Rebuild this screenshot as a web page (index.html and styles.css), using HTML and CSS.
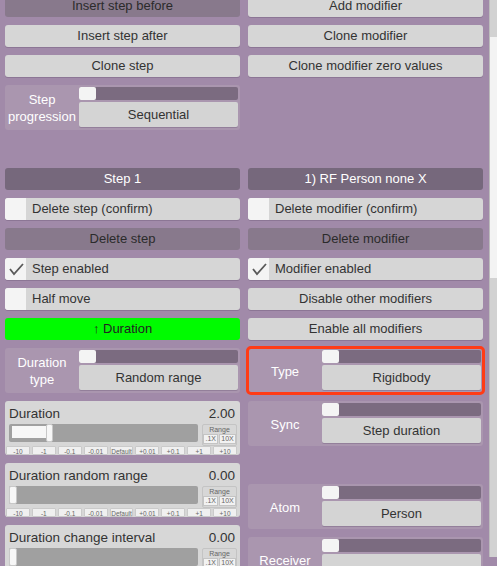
FILE: index.html
```html
<!DOCTYPE html>
<html>
<head>
<meta charset="utf-8">
<link rel="stylesheet" href="styles.css">
</head>
<body>
<div class="screen">
  <div class="content">
    <div class="col">
      <div class="btn dim">Insert step before</div>
      <div class="btn">Insert step after</div>
      <div class="btn">Clone step</div>
      <div class="popup">
        <div class="plabel">Step<br>progression</div>
        <div class="pbody">
          <div class="ptrack"><div class="pknob"></div></div>
          <div class="pbtn">Sequential</div>
        </div>
      </div>
      <div class="header gap-left">Step 1</div>
      <div class="check"><div class="box"></div><span>Delete step (confirm)</span></div>
      <div class="btn dim">Delete step</div>
      <div class="check"><div class="box"><svg width="21" height="22" viewBox="0 0 21 22"><polyline points="5,11 9,16 18,6" fill="none" stroke="#5a5a5a" stroke-width="1.8"/></svg></div><span>Step enabled</span></div>
      <div class="check"><div class="box"></div><span>Half move</span></div>
      <div class="btn green">↑ Duration</div>
      <div class="popup">
        <div class="plabel">Duration<br>type</div>
        <div class="pbody">
          <div class="ptrack"><div class="pknob"></div></div>
          <div class="pbtn">Random range</div>
        </div>
      </div>
      <div class="slider">
        <div class="shead"><span>Duration</span><span>2.00</span></div>
        <div class="smid">
          <div class="strack"><div class="sfill" style="width:35px"></div><div class="sknob"></div></div>
          <div class="range"><div class="rlabel">Range</div><div class="rbtns"><span>.1X</span><span>10X</span></div></div>
        </div>
        <div class="sbtns"><span>-10</span><span>-1</span><span>-0.1</span><span>-0.01</span><span>Default</span><span>+0.01</span><span>+0.1</span><span>+1</span><span>+10</span></div>
      </div>
      <div class="slider">
        <div class="shead"><span>Duration random range</span><span>0.00</span></div>
        <div class="smid">
          <div class="strack"><div class="sknob start"></div></div>
          <div class="range"><div class="rlabel">Range</div><div class="rbtns"><span>.1X</span><span>10X</span></div></div>
        </div>
        <div class="sbtns"><span>-10</span><span>-1</span><span>-0.1</span><span>-0.01</span><span>Default</span><span>+0.01</span><span>+0.1</span><span>+1</span><span>+10</span></div>
      </div>
      <div class="slider">
        <div class="shead"><span>Duration change interval</span><span>0.00</span></div>
        <div class="smid">
          <div class="strack"><div class="sknob start"></div></div>
          <div class="range"><div class="rlabel">Range</div><div class="rbtns"><span>.1X</span><span>10X</span></div></div>
        </div>
        <div class="sbtns"><span>-10</span><span>-1</span><span>-0.1</span><span>-0.01</span><span>Default</span><span>+0.01</span><span>+0.1</span><span>+1</span><span>+10</span></div>
      </div>
    </div>
    <div class="col">
      <div class="btn">Add modifier</div>
      <div class="btn">Clone modifier</div>
      <div class="btn">Clone modifier zero values</div>
      <div class="header gap-right">1) RF Person none X</div>
      <div class="check"><div class="box"></div><span>Delete modifier (confirm)</span></div>
      <div class="btn dim">Delete modifier</div>
      <div class="check"><div class="box"><svg width="21" height="22" viewBox="0 0 21 22"><polyline points="5,11 9,16 18,6" fill="none" stroke="#5a5a5a" stroke-width="1.8"/></svg></div><span>Modifier enabled</span></div>
      <div class="btn">Disable other modifiers</div>
      <div class="btn">Enable all modifiers</div>
      <div class="popup marked">
        <div class="plabel">Type</div>
        <div class="pbody">
          <div class="ptrack"><div class="pknob"></div></div>
          <div class="pbtn">Rigidbody</div>
        </div>
      </div>
      <div class="popup">
        <div class="plabel">Sync</div>
        <div class="pbody">
          <div class="ptrack"><div class="pknob"></div></div>
          <div class="pbtn">Step duration</div>
        </div>
      </div>
      <div class="popup gap-atom">
        <div class="plabel">Atom</div>
        <div class="pbody">
          <div class="ptrack"><div class="pknob"></div></div>
          <div class="pbtn">Person</div>
        </div>
      </div>
      <div class="popup">
        <div class="plabel">Receiver</div>
        <div class="pbody">
          <div class="ptrack"><div class="pknob"></div></div>
          <div class="pbtn"></div>
        </div>
      </div>
    </div>
  </div>
  <div class="scrollbar"><div class="thumb"></div></div>
</div>
</body>
</html>
```
FILE: styles.css
```css
* { box-sizing: border-box; }
html, body { margin: 0; padding: 0; }
body {
  font-family: "Liberation Sans", Arial, sans-serif;
  font-size: 13px;
  color: #333;
  background: #a18aa9;
}
.screen {
  width: 497px;
  height: 566px;
  overflow: hidden;
  display: flex;
  align-items: flex-start;
  background: #a18aa9;
}
.content {
  flex: none;
  width: 489px;
  margin-top: -5px;
  padding-left: 5px;
  display: grid;
  grid-template-columns: 235px 235px;
  column-gap: 8px;
  align-items: start;
}
.col {
  display: flex;
  flex-direction: column;
  gap: 8px;
}
.btn {
  height: 22px;
  line-height: 22px;
  text-align: center;
  background: #d6d6d6;
  border-radius: 3px;
  box-shadow: 0 1px 0 rgba(80, 60, 90, 0.25);
  white-space: nowrap;
}
.btn.dim { background: #88798c; color: #2b2b2b; box-shadow: none; }
.btn.green { background: #00fb00; color: #222; box-shadow: none; }
.header {
  height: 22px;
  line-height: 22px;
  text-align: center;
  background: #76687c;
  color: #fff;
  border-radius: 3px;
}
.gap-left { margin-top: 30px; }
.gap-right { margin-top: 83px; }
.gap-atom { margin-top: 30px; }
.check {
  height: 22px;
  display: flex;
  background: #d6d6d6;
  border-radius: 3px;
  box-shadow: 0 1px 0 rgba(80, 60, 90, 0.25);
  overflow: hidden;
}
.check .box {
  width: 21px;
  height: 22px;
  background: #f4f4f4;
  flex: none;
}
.check .box svg { display: block; }
.check span {
  line-height: 22px;
  padding-left: 6px;
}
.popup {
  height: 45px;
  display: flex;
  background: #aa96af;
  border-radius: 3px;
  padding: 2px 2px 3px 0;
}
.popup.marked {
  outline: 3px solid #ff3b16;
  outline-offset: -1px;
}
.plabel {
  width: 74px;
  flex: none;
  color: #fff;
  text-align: center;
  display: flex;
  align-items: center;
  justify-content: center;
  line-height: 17px;
  padding-top: 2px;
}
.pbody {
  flex: 1;
  display: flex;
  flex-direction: column;
  gap: 2px;
}
.ptrack {
  height: 13px;
  background: #7b6b80;
  border-radius: 2px;
}
.pknob {
  width: 17px;
  height: 13px;
  background: #f4f4f4;
  border-radius: 2px;
}
.pbtn {
  height: 25px;
  line-height: 25px;
  text-align: center;
  background: #d4d4d4;
  border-radius: 2px;
  box-shadow: 0 1px 0 rgba(80, 60, 90, 0.25);
}
.slider {
  height: 54px;
  background: #d7d7d7;
  border-radius: 3px;
  display: flex;
  flex-direction: column;
}
.shead {
  height: 23px;
  display: flex;
  justify-content: space-between;
  align-items: center;
  padding: 1px 5px 0 4px;
  font-size: 13.5px;
  color: #333;
}
.smid {
  height: 22px;
  display: flex;
  align-items: flex-start;
  padding-left: 4px;
  gap: 4px;
}
.strack {
  width: 189px;
  height: 18px;
  background: #a0a0a0;
  border-radius: 2px;
  position: relative;
}
.sfill {
  position: absolute;
  left: 3px;
  top: 2px;
  height: 12px;
  background: #f7f7f7;
}
.sknob {
  position: absolute;
  left: 37px;
  top: 0;
  width: 7px;
  height: 18px;
  background: #f7f7f7;
  border: 1px solid #c8c8c8;
  border-radius: 2px;
}
.sknob.start { left: 0; width: 8px; }
.range {
  width: 35px;
  height: 22px;
  border: 1px solid #c4c4c4;
  border-radius: 2px;
  display: flex;
  flex-direction: column;
  align-items: center;
}
.rlabel {
  font-size: 7px;
  line-height: 9px;
  color: #666;
}
.rbtns {
  display: flex;
  gap: 1px;
}
.rbtns span {
  font-size: 7px;
  line-height: 8px;
  height: 10px;
  padding: 0 1px;
  background: #f2f2f2;
  border: 1px solid #c4c4c4;
  color: #666;
  min-width: 15px;
  text-align: center;
}
.sbtns {
  height: 9px;
  display: flex;
  gap: 2px;
  padding: 0 3px 0 1px;
}
.sbtns span {
  flex: 1;
  height: 9px;
  font-size: 6.5px;
  line-height: 9px;
  text-align: center;
  background: #f0f0f0;
  border: 1px solid #cacaca;
  border-radius: 1px;
  color: #666;
  white-space: nowrap;
  overflow: hidden;
}
.scrollbar {
  flex: none;
  width: 8px;
  height: 557px;
  background: #d2d2d2;
  border-left: 1px solid #bcbcbc;
  padding-top: 37px;
}
.thumb {
  height: 241px;
  background: #f3f3f3;
}
```
